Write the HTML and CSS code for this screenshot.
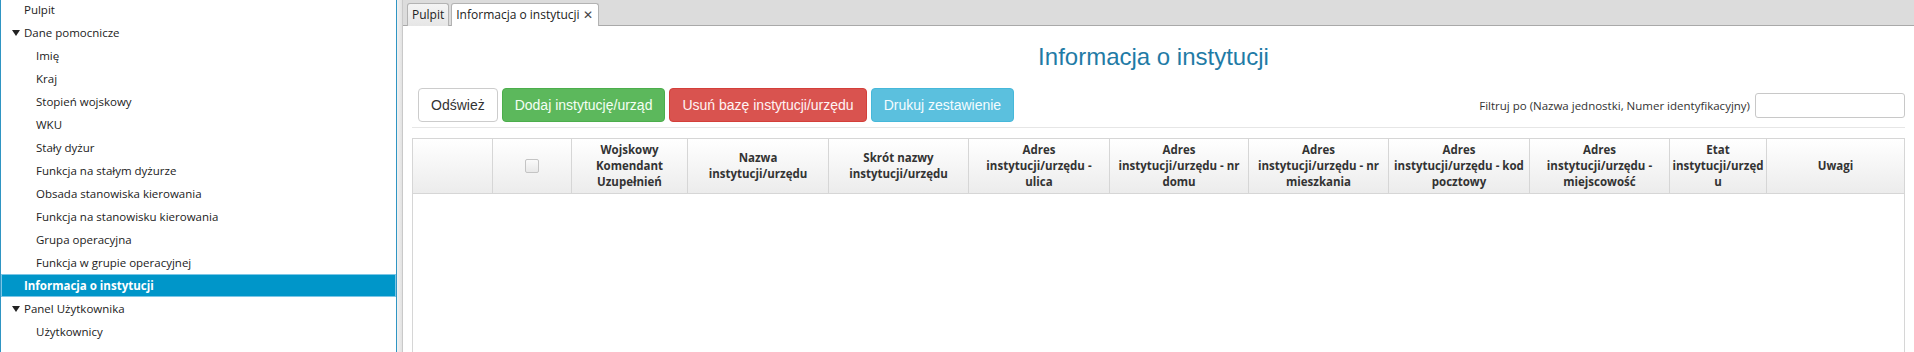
FILE: index.html
```html
<!DOCTYPE html>
<html lang="pl">
<head>
<meta charset="utf-8">
<title>Informacja o instytucji</title>
<link rel="stylesheet" href="styles.css">
</head>
<body>
<div class="app">
  <aside class="sidebar">
    <ul class="tree">
      <li class="row lvl1">Pulpit</li>
      <li class="row lvl1 branch"><svg class="arrow" width="8" height="6" viewBox="0 0 8 6"><polygon points="0,0 8,0 4,6" fill="#222"/></svg>Dane pomocnicze</li>
      <li class="row lvl2">Imię</li>
      <li class="row lvl2">Kraj</li>
      <li class="row lvl2">Stopień wojskowy</li>
      <li class="row lvl2">WKU</li>
      <li class="row lvl2">Stały dyżur</li>
      <li class="row lvl2">Funkcja na stałym dyżurze</li>
      <li class="row lvl2">Obsada stanowiska kierowania</li>
      <li class="row lvl2">Funkcja na stanowisku kierowania</li>
      <li class="row lvl2">Grupa operacyjna</li>
      <li class="row lvl2">Funkcja w grupie operacyjnej</li>
      <li class="row lvl1 selected">Informacja o instytucji</li>
      <li class="row lvl1 branch"><svg class="arrow" width="8" height="6" viewBox="0 0 8 6"><polygon points="0,0 8,0 4,6" fill="#222"/></svg>Panel Użytkownika</li>
      <li class="row lvl2">Użytkownicy</li>
    </ul>
  </aside>
  <div class="divider"></div>
  <main class="main">
    <div class="tabbar">
      <div class="tab">Pulpit</div>
      <div class="tab active">Informacja o instytucji <span class="close">✕</span></div>
    </div>
    <div class="content">
      <h1 class="title">Informacja o instytucji</h1>
      <div class="toolbar">
        <div class="buttons">
          <button class="btn btn-default">Odśwież</button>
          <button class="btn btn-success">Dodaj instytucję/urząd</button>
          <button class="btn btn-danger">Usuń bazę instytucji/urzędu</button>
          <button class="btn btn-info">Drukuj zestawienie</button>
        </div>
        <div class="filter">
          <label class="filter-label">Filtruj po (Nazwa jednostki, Numer identyfikacyjny)</label>
          <input class="filter-input" type="text">
        </div>
      </div>
      <div class="sep"></div>
      <div class="table">
        <div class="thead">
          <div class="th" style="width:80px"></div>
          <div class="th" style="width:79px"><span class="chk"></span></div>
          <div class="th" style="width:116px">Wojskowy<br>Komendant<br>Uzupełnień</div>
          <div class="th" style="width:141px">Nazwa<br>instytucji/urzędu</div>
          <div class="th" style="width:140px">Skrót nazwy<br>instytucji/urzędu</div>
          <div class="th" style="width:141px">Adres<br>instytucji/urzędu -<br>ulica</div>
          <div class="th" style="width:139px">Adres<br>instytucji/urzędu - nr<br>domu</div>
          <div class="th" style="width:140px">Adres<br>instytucji/urzędu - nr<br>mieszkania</div>
          <div class="th" style="width:141px">Adres<br>instytucji/urzędu - kod<br>pocztowy</div>
          <div class="th" style="width:140px">Adres<br>instytucji/urzędu -<br>miejscowość</div>
          <div class="th" style="width:97px">Etat<br>instytucji/urzęd<br>u</div>
          <div class="th last">Uwagi</div>
        </div>
        <div class="tbody"></div>
      </div>
    </div>
  </main>
</div>
</body>
</html>
```
FILE: styles.css
```css
* { box-sizing: border-box; }
html, body { margin: 0; padding: 0; }
body {
  width: 1914px;
  height: 352px;
  overflow: hidden;
  background: #fff;
  font-family: "Open Sans", "Noto Sans", sans-serif;
  color: #333;
}
.app {
  display: flex;
  height: 352px;
}
.sidebar {
  width: 397px;
  flex: none;
  border-left: 1px solid #2f95c3;
  border-right: 1px solid #2f95c3;
  background: #fff;
  overflow: hidden;
}
.tree {
  list-style: none;
  margin: -2px 0 0 0;
  padding: 0;
}
.row {
  height: 23px;
  line-height: 23px;
  font-size: 11.5px;
  color: #222;
  white-space: nowrap;
  position: relative;
}
.lvl1 { padding-left: 23px; }
.lvl2 { padding-left: 35px; }
.arrow {
  position: absolute;
  left: 11px;
  top: 9px;
}
.selected {
  background: #0096c9;
  border: 1px solid #7cc6e6;
  color: #fff;
  font-weight: 700;
  line-height: 21px;
  padding-left: 22px;
}
.divider {
  width: 6px;
  flex: none;
  background: linear-gradient(to right, #f2f2f2, #e2e2e2);
  border-right: 1px solid #c9c9c9;
}
.main {
  flex: 1;
  display: flex;
  flex-direction: column;
  min-width: 0;
}
.tabbar {
  height: 26px;
  flex: none;
  background: #dcdcdc;
  border-bottom: 1px solid #a9a9a9;
  display: flex;
  align-items: flex-end;
  padding-left: 4px;
  gap: 2px;
}
.tab {
  height: 23px;
  margin-bottom: -1px;
  padding: 0 4px;
  font-size: 12px;
  line-height: 21px;
  color: #222;
  border: 1px solid #b3b3b3;
  border-bottom: none;
  border-radius: 3px 3px 0 0;
  background: linear-gradient(#f4f4f4, #e6e6e6);
}
.tab.active {
  background: #fff;
  padding-right: 5px;
}
.close {
  font-size: 12px;
  color: #444;
}
.content {
  flex: 1;
  padding: 0 9px 0 9px;
  display: flex;
  flex-direction: column;
}
.title {
  margin: 0;
  height: 62px;
  padding-top: 17px;
  padding-right: 10px;
  text-align: center;
  font-family: "Liberation Sans", Arial, sans-serif;
  font-weight: 400;
  font-size: 24px;
  line-height: 28px;
  color: #1f7ba6;
}
.toolbar {
  display: flex;
  justify-content: space-between;
  align-items: center;
  padding-left: 6px;
  height: 34px;
}
.buttons {
  display: flex;
  gap: 4px;
}
.btn {
  height: 34px;
  padding: 0 12px;
  font-family: "Liberation Sans", Arial, sans-serif;
  font-size: 14px;
  border-radius: 4px;
  border: 1px solid #ccc;
  color: #fff;
}
.btn-default { background: #fff; color: #333; border-color: #ccc; }
.btn-success { background: #5cb85c; border-color: #4cae4c; color: #f4fff4; }
.btn-danger { background: #d9534f; border-color: #d43f3a; color: #fff4f4; }
.btn-info { background: #5bc0de; border-color: #46b8da; color: #f4fcff; }
.filter {
  display: flex;
  align-items: center;
  gap: 5px;
  padding-right: 0;
}
.filter-label {
  font-size: 11.5px;
  color: #333;
}
.filter-input {
  width: 150px;
  height: 25px;
  border: 1px solid #c8c8c8;
  border-radius: 3px;
  background: #fff;
}
.sep {
  height: 1px;
  background: #e6e6e6;
  margin-top: 5px;
}
.table {
  margin-top: 10px;
  flex: 1;
  border: 1px solid #d6d6d6;
  border-bottom: none;
  display: flex;
  flex-direction: column;
}
.thead {
  display: flex;
  height: 55px;
  background: linear-gradient(#ffffff, #ececec);
  border-bottom: 1px solid #d6d6d6;
}
.th {
  flex: none;
  border-right: 1px solid #d6d6d6;
  display: flex;
  align-items: center;
  justify-content: center;
  text-align: center;
  font-size: 11.5px;
  font-weight: 700;
  line-height: 16px;
  color: #333;
  padding: 0 2px;
  white-space: nowrap;
  overflow: hidden;
}
.th.last {
  flex: 1;
  border-right: none;
}
.chk {
  width: 14px;
  height: 14px;
  border: 1px solid #c4c4c4;
  border-radius: 2px;
  background: linear-gradient(#fafafa, #e8e8e8);
}
.tbody {
  flex: 1;
  background: #fff;
}
```
